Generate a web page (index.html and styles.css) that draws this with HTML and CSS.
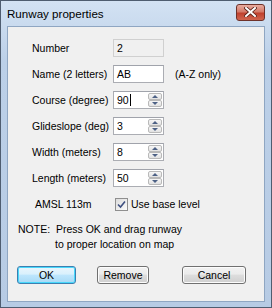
FILE: index.html
```html
<!DOCTYPE html>
<html lang="en">
<head>
    <meta charset="UTF-8">
    <meta name="viewport" content="width=device-width, initial-scale=1.0">
    <title>Runway properties</title>
    <link rel="stylesheet" href="styles.css">
</head>
<body>

<div class="window">
    <div class="titlebar">
        <span class="title">Runway properties</span>
        <div class="close-btn">
            <svg width="13" height="10" viewBox="0 0 13 10">
                <path d="M2 1 L11 9 M11 1 L2 9" stroke="#5a2018" stroke-width="3.6" stroke-linecap="square"/>
                <path d="M2 1 L11 9 M11 1 L2 9" stroke="#ffffff" stroke-width="2" stroke-linecap="square"/>
            </svg>
        </div>
    </div>

    <div class="client">
        <div class="row">
            <span class="label">Number</span>
            <div class="field disabled">2</div>
        </div>
        <div class="row">
            <span class="label">Name (2 letters)</span>
            <div class="field">AB</div>
            <span class="hint">(A-Z only)</span>
        </div>
        <div class="row">
            <span class="label">Course (degree)</span>
            <div class="field">90<span class="caret"></span>
                <div class="spin"><div class="spin-up"></div><div class="spin-down"></div></div>
            </div>
        </div>
        <div class="row">
            <span class="label">Glideslope (deg)</span>
            <div class="field">3
                <div class="spin"><div class="spin-up"></div><div class="spin-down"></div></div>
            </div>
        </div>
        <div class="row">
            <span class="label">Width (meters)</span>
            <div class="field">8
                <div class="spin"><div class="spin-up"></div><div class="spin-down"></div></div>
            </div>
        </div>
        <div class="row">
            <span class="label">Length (meters)</span>
            <div class="field">50
                <div class="spin"><div class="spin-up"></div><div class="spin-down"></div></div>
            </div>
        </div>
        <div class="row">
            <span class="label amsl">AMSL 113m</span>
            <div class="check">
                <svg width="9" height="9" viewBox="0 0 9 9">
                    <path d="M1 4.5 L3.5 7 L8 1.5" fill="none" stroke="#3d4f80" stroke-width="1.6"/>
                </svg>
            </div>
            <span class="check-text">Use base level</span>
        </div>

        <div class="note">
            <div>NOTE:&nbsp; Press OK and drag runway</div>
            <div class="note-2">to proper location on map</div>
        </div>

        <div class="buttons">
            <div class="btn default btn-ok">OK</div>
            <div class="btn btn-remove">Remove</div>
            <div class="btn btn-cancel">Cancel</div>
        </div>
    </div>
</div>

</body>
</html>
```

FILE: styles.css
```css
body {
    margin: 0;
    padding: 0;
    font-family: "Liberation Sans", Arial, sans-serif;
    font-size: 10.5px;
    color: black;
    background-color: white;
}

.window {
    width: 272px;
    height: 308px;
    box-sizing: border-box;
    border: 1px solid #4f5d70;
    background: linear-gradient(to bottom, #d3e2f3, #bcd0e8 60px, #b7cbe4);
    padding: 0 6px 5px 6px;
    display: flex;
    flex-direction: column;
}

.titlebar {
    height: 25px;
    display: flex;
    align-items: center;
    justify-content: space-between;
    flex-shrink: 0;
}

.title {
    font-size: 11.6px;
    margin-top: -1px;
}

.close-btn {
    width: 29px;
    height: 17px;
    box-sizing: border-box;
    border: 1px solid #6e3129;
    border-radius: 3px;
    background: linear-gradient(to bottom, #e8ab9f, #d47a69 45%, #c0412e 55%, #d0654f);
    display: flex;
    align-items: center;
    justify-content: center;
    margin-top: -3px;
}

.client {
    flex: 1;
    background-color: #f0f0f0;
    border: 1px solid #8fa6c2;
    padding: 12px 0 0 24px;
    display: flex;
    flex-direction: column;
    gap: 8px;
}

.row {
    display: flex;
    align-items: center;
    height: 18px;
}

.label {
    width: 81px;
    flex-shrink: 0;
}

.label.amsl {
    padding-left: 3px;
    width: 79px;
}

.field {
    position: relative;
    width: 51px;
    height: 18px;
    box-sizing: border-box;
    border: 1px solid #abadb3;
    border-top-color: #a0a3ab;
    background-color: white;
    padding: 2px 0 0 3px;
    line-height: 13px;
}

.field.disabled {
    background-color: #f0f0f0;
    border-color: #d0d0d0;
}

.caret {
    display: inline-block;
    width: 1px;
    height: 12px;
    background-color: black;
    vertical-align: -2px;
    margin-left: 1px;
}

.hint {
    margin-left: 11px;
}

/* spinner on right side of the box */
.spin {
    position: absolute;
    top: 1px;
    right: 1px;
    width: 14px;
    height: 14px;
    display: flex;
    flex-direction: column;
}

.spin-up,
.spin-down {
    position: relative;
    flex: 1;
    box-sizing: border-box;
    border: 1px solid #b9b9b9;
    border-radius: 2px;
    background: linear-gradient(to bottom, #f6f6f6, #e2e2e2);
}

.spin-up::after,
.spin-down::after {
    content: "";
    position: absolute;
    left: 3px;
    top: 1px;
    border-left: 3px solid transparent;
    border-right: 3px solid transparent;
}

.spin-up::after {
    border-bottom: 3px solid #4d6185;
}

.spin-down::after {
    border-top: 3px solid #4d6185;
}

.check {
    width: 13px;
    height: 13px;
    box-sizing: border-box;
    border: 1px solid #8f8f8f;
    background: linear-gradient(to bottom right, #dcdcdc, #fbfbfb);
    margin-left: 1px;
    display: flex;
    align-items: center;
    justify-content: center;
}

.check-text {
    margin-left: 3px;
}

.note {
    margin-left: -14px;
    margin-top: 1px;
    line-height: 15px;
}

.note-2 {
    padding-left: 37px;
}

.buttons {
    display: flex;
    margin-left: -15px;
    margin-top: 6px;
}

.btn {
    height: 18px;
    box-sizing: border-box;
    border: 1px solid #707070;
    border-radius: 3px;
    background: linear-gradient(to bottom, #f2f2f2, #ebebeb 45%, #dddddd 50%, #cfcfcf);
    display: flex;
    align-items: center;
    justify-content: center;
    box-shadow: inset 0 0 0 1px #fcfcfc;
}

.btn.default {
    border-color: #3c7fb1;
    background: linear-gradient(to bottom, #eaf6fd, #d9f0fc 45%, #bee6fd 50%, #a7d9f5);
    box-shadow: inset 0 0 0 1px #48d8fb;
}

.btn-ok {
    width: 59px;
}

.btn-remove {
    width: 52px;
    margin-left: 21px;
}

.btn-cancel {
    width: 64px;
    margin-left: 33px;
}
```
